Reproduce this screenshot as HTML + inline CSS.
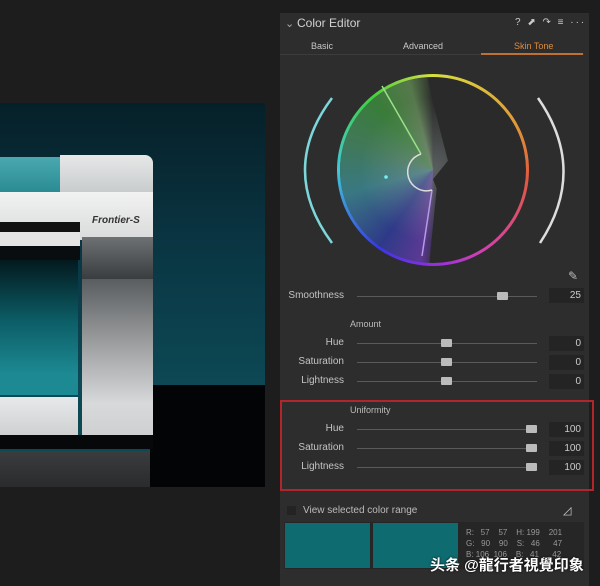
<!DOCTYPE html>
<html><head><meta charset="utf-8"><style>
*{margin:0;padding:0;box-sizing:border-box}
body{width:600px;height:586px;background:#1d1d1e;position:relative;overflow:hidden;font-family:"Liberation Sans","Noto Sans CJK SC",sans-serif;color:#bdbdbd}
.a{position:absolute}
.lbl{position:absolute;font-size:10px;color:#c4c4c4;text-align:right;width:60px;left:284px}
.track{position:absolute;left:357px;width:180px;height:1px;background:#5a5a5a}
.thumb{position:absolute;width:11px;height:8px;background:#bbb;border-radius:1px}
.val{position:absolute;left:549px;width:35px;height:15px;background:#242424;font-size:10px;color:#ccc;text-align:right;padding-right:3px;line-height:15px}
</style></head><body>
<!-- photo -->
<div class="a" style="left:0;top:103px;width:265px;height:384px;background:linear-gradient(180deg,#062029 0%,#0a3744 40%,#0d4955 75%);overflow:hidden">
  <div class="a" style="left:150px;top:282px;width:115px;height:102px;background:#020405"></div>
  <div class="a" style="left:0;top:54px;width:82px;height:36px;background:linear-gradient(180deg,#4aa9b0,#2a8a92)"></div>
  <div class="a" style="left:60px;top:52px;width:93px;height:38px;background:linear-gradient(180deg,#e6e8e8,#c8cbcc);border-radius:0 8px 0 0"></div>
  <div class="a" style="left:0;top:89px;width:153px;height:48px;background:linear-gradient(180deg,#f2f2f2,#d9dadb)"></div>
  <div class="a" style="left:92px;top:112px;font:italic bold 10px 'Liberation Sans',sans-serif;color:#333">Frontier-S</div>
  <div class="a" style="left:0;top:119px;width:80px;height:10px;background:#111"></div>
  <div class="a" style="left:0;top:129px;width:80px;height:14px;background:#e4e4e4"></div>
  <div class="a" style="left:0;top:143px;width:80px;height:14px;background:#0a0d0f"></div>
  <div class="a" style="left:82px;top:134px;width:71px;height:42px;background:linear-gradient(180deg,#6e7173,#3a3d3f)"></div>
  <div class="a" style="left:82px;top:176px;width:71px;height:156px;background:linear-gradient(180deg,#5a5d5f,#9a9c9e 40%,#d8d9da 80%,#cfd0d1)"></div>
  <div class="a" style="left:0;top:157px;width:78px;height:135px;background:linear-gradient(180deg,#03191e,#0c5d66 45%,#1d8a93 85%)"></div>
  <div class="a" style="left:0;top:294px;width:78px;height:38px;background:linear-gradient(180deg,#e8e9ea,#cfd0d1)"></div>
  <div class="a" style="left:0;top:332px;width:153px;height:14px;background:#070809"></div>
  <div class="a" style="left:0;top:348px;width:150px;height:36px;background:linear-gradient(180deg,#3a3c3e,#2a2b2c)"></div>
</div>
<!-- panel -->
<div class="a" style="left:280px;top:13px;width:309px;height:573px;background:#2d2d2e"></div>
<div class="a" style="left:285px;top:17px;font-size:11px;color:#aaa">&#8964;</div>
<div class="a" style="left:297px;top:16px;font-size:12px;color:#d2d2d2">Color Editor</div>
<div class="a" style="left:515px;top:17px;font-size:10px;color:#ccc;white-space:nowrap;letter-spacing:2px">? ⬈ ↷ ≡ ···</div>
<div class="a" style="left:280px;top:54px;width:304px;height:1px;background:#3c3c3c"></div>
<div class="a" style="left:311px;top:41px;font-size:9px;color:#c8c8c8">Basic</div>
<div class="a" style="left:403px;top:41px;font-size:9px;color:#c8c8c8">Advanced</div>
<div class="a" style="left:514px;top:41px;font-size:9px;color:#e08a3a">Skin Tone</div>
<div class="a" style="left:481px;top:53px;width:102px;height:2px;background:#c07030"></div>
<!-- wheel -->
<div class="a" style="left:337px;top:74px;width:192px;height:192px;border-radius:50%;background:conic-gradient(#d8e040 0deg,#e09a38 60deg,#e05a40 95deg,#d040b0 150deg,#9030e0 180deg,#3838e0 215deg,#40c8d8 270deg,#40d040 320deg,#d8e040 360deg)"></div>
<div class="a" style="left:340px;top:77px;width:186px;height:186px;border-radius:50%;background:#2a2a2a"></div>
<div class="a" style="left:340px;top:77px;width:186px;height:186px;border-radius:50%;opacity:.7;background:conic-gradient(#2a2a2a 0deg,#2a2a2a 175deg,#7040c0 188deg,#3040b0 215deg,#409aa8 255deg,#4a9a6a 290deg,#40a040 320deg,#6a9a5a 345deg,#2a2a2a 360deg);clip-path:polygon(0 0,47% 0,49% 10%,58% 45%,50% 55%,52% 60%,48% 100%,0 100%)"></div>
<div class="a" style="left:340px;top:77px;width:186px;height:186px;border-radius:50%;background:radial-gradient(circle at 50% 50%,rgba(150,160,160,.45) 0%,rgba(0,0,0,0) 55%);clip-path:polygon(0 0,47% 0,49% 10%,58% 45%,50% 55%,52% 60%,48% 100%,0 100%)"></div>
<svg class="a" style="left:280px;top:60px" width="310" height="230">
<line x1="102" y1="26" x2="141" y2="94" stroke="#9be08a" stroke-width="1.5"/>
<line x1="152" y1="130" x2="142" y2="196" stroke="#b49be8" stroke-width="1.5"/>
<path d="M141 94 A18 18 0 0 0 152 130" fill="none" stroke="#ddd" stroke-width="1.5"/>
<circle cx="106" cy="117" r="1.8" fill="#7ee"/>
<path d="M52 38 Q-2 110 52 183" fill="none" stroke="#7cd6da" stroke-width="2.5"/>
<path d="M258 38 Q308 110 260 183" fill="none" stroke="#ddd" stroke-width="2.5"/>
<text x="288" y="220" font-size="12" fill="#bbb" font-family="DejaVu Sans">✎</text>
</svg>
<!-- sliders -->
<div class="lbl" style="top:290px">Smoothness</div>
<div class="track" style="top:296px"></div><div class="thumb" style="left:497px;top:292px"></div><div class="val" style="top:288px">25</div>
<div class="a" style="left:350px;top:319px;font-size:9px;color:#bbb">Amount</div>
<div class="lbl" style="top:337px">Hue</div>
<div class="track" style="top:343px"></div><div class="thumb" style="left:441px;top:339px"></div><div class="val" style="top:336px">0</div>
<div class="lbl" style="top:356px">Saturation</div>
<div class="track" style="top:362px"></div><div class="thumb" style="left:441px;top:358px"></div><div class="val" style="top:355px">0</div>
<div class="lbl" style="top:375px">Lightness</div>
<div class="track" style="top:381px"></div><div class="thumb" style="left:441px;top:377px"></div><div class="val" style="top:374px">0</div>
<div class="a" style="left:280px;top:400px;width:314px;height:91px;border:2px solid #b0262a"></div>
<div class="a" style="left:350px;top:405px;font-size:9px;color:#bbb">Uniformity</div>
<div class="lbl" style="top:423px">Hue</div>
<div class="track" style="top:429px"></div><div class="thumb" style="left:526px;top:425px"></div><div class="val" style="top:422px">100</div>
<div class="lbl" style="top:442px">Saturation</div>
<div class="track" style="top:448px"></div><div class="thumb" style="left:526px;top:444px"></div><div class="val" style="top:441px">100</div>
<div class="lbl" style="top:461px">Lightness</div>
<div class="track" style="top:467px"></div><div class="thumb" style="left:526px;top:463px"></div><div class="val" style="top:460px">100</div>
<div class="a" style="left:287px;top:506px;width:9px;height:9px;background:#232323"></div>
<div class="a" style="left:303px;top:505px;font-size:10px;color:#bbb">View selected color range</div>
<div class="a" style="left:563px;top:504px;font-size:11px;color:#ccc">◿</div>
<div class="a" style="left:284px;top:522px;width:300px;height:47px;background:#262626"></div>
<div class="a" style="left:285px;top:523px;width:85px;height:45px;background:#0e6b70"></div>
<div class="a" style="left:373px;top:523px;width:85px;height:45px;background:#0e6b70"></div>
<div class="a" style="left:466px;top:527px;font-size:8px;color:#999;line-height:11px;white-space:pre;font-family:'Liberation Sans',sans-serif">R:   57    57    H: 199    201
G:   90    90    S:   46      47
B: 106  106    B:   41      42</div>
<div class="a" style="left:430px;top:554px;font-size:15px;font-weight:bold;color:#fff;text-shadow:0 0 2px #000">头条 @龍行者視覺印象</div>
</body></html>
